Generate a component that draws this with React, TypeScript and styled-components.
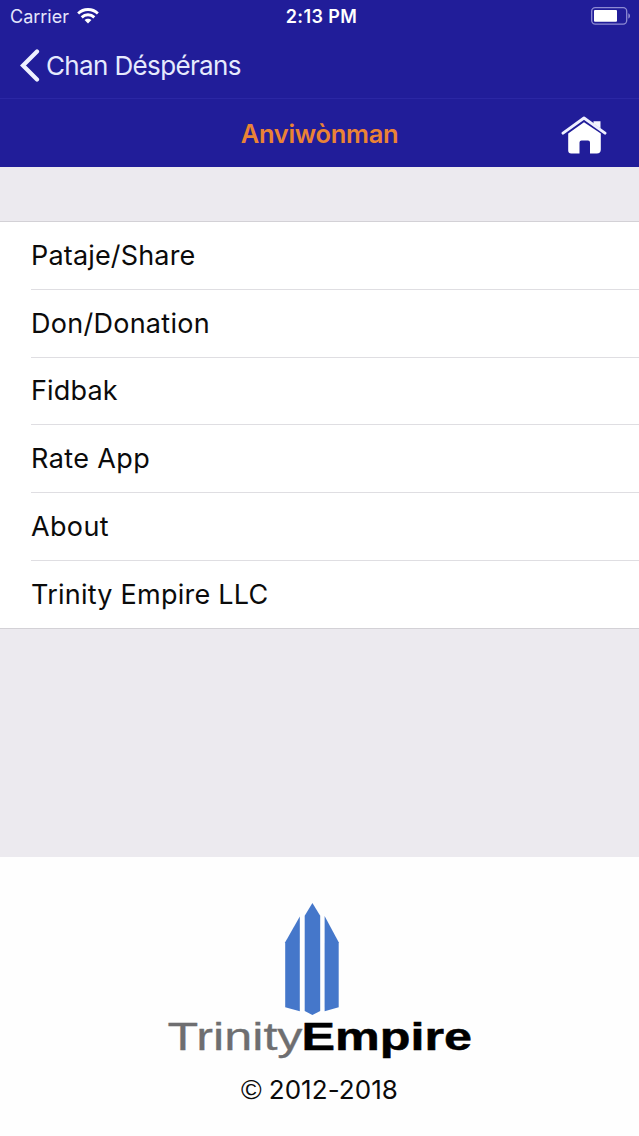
import React from 'react';
import styled, { createGlobalStyle } from 'styled-components';

const GlobalStyle = createGlobalStyle`
  * { box-sizing: border-box; }
  body {
    margin: 0;
    background: #fff;
    font-family: Inter, "Liberation Sans", sans-serif;
    -webkit-font-smoothing: antialiased;
  }
`;

const Screen = styled.div`
  width: 639px;
  height: 1136px;
  display: flex;
  flex-direction: column;
  overflow: hidden;
  background: #eceaef;
`;

const Header = styled.header`
  flex: none;
  height: 167px;
  background: #211d99;
  color: #fff;
`;

const StatusBar = styled.div`
  height: 34px;
  display: grid;
  grid-template-columns: 1fr auto 1fr;
  align-items: center;
  padding: 0 8px 2px 10px;
`;

const Carrier = styled.div`
  display: flex;
  align-items: center;
  gap: 8px;
  font-size: 18px;
  letter-spacing: 0;
  color: #e4e6fb;
`;

const Clock = styled.div`
  font-size: 18px;
  font-weight: 600;
  letter-spacing: 0.4px;
  padding-left: 2px;
`;

const Battery = styled.div`
  justify-self: end;
  display: flex;
`;

const BackBar = styled.div`
  height: 65px;
  display: flex;
  align-items: center;
  gap: 6px;
  padding: 0 0 2px 20px;
  border-bottom: 1px solid #2b27a4;
`;

const BackLabel = styled.span`
  font-size: 26px;
  line-height: 32px;
  letter-spacing: -0.64px;
  padding-top: 1px;
  color: #e6eafd;
`;

const TitleBar = styled.div`
  height: 68px;
  display: grid;
  grid-template-columns: 1fr auto 1fr;
  align-items: center;
  padding-right: 32px;
  padding-left: 32px;
`;

const Title = styled.h1`
  grid-column: 2;
  margin: 0;
  padding-top: 2px;
  font-size: 25.5px;
  line-height: 32px;
  font-weight: 600;
  letter-spacing: -0.3px;
  color: #ea8335;
`;

const HomeButton = styled.div`
  justify-self: end;
  display: flex;
  padding-top: 4px;
`;

const Menu = styled.ul`
  flex: none;
  list-style: none;
  margin: 54px 0 0;
  padding: 0 0 0 31px;
  background: #fff;
  border-top: 1px solid #d3d1d6;
  border-bottom: 1px solid #d3d1d6;
`;

const MenuItem = styled.li<{ $spacing: number }>`
  height: 67.8px;
  display: flex;
  align-items: center;
  font-size: 27px;
  letter-spacing: ${(p) => p.$spacing}px;
  color: #0b0b0b;
  border-bottom: 1px solid #dfdee2;
  &:last-child {
    height: 67px;
    border-bottom: 0;
  }
`;

const Footer = styled.footer`
  margin-top: auto;
  height: 279px;
  display: flex;
  flex-direction: column;
  align-items: center;
  padding-top: 43px;
  background: #fefefe;
`;

const Copyright = styled.div`
  display: flex;
  align-items: center;
  gap: 7px;
  margin-top: 14px;
  font-size: 26px;
  line-height: 32px;
  letter-spacing: 0.05px;
  color: #0a0a0a;
`;

const CopyrightSign = styled.span`
  font-family: "Liberation Sans", sans-serif;
  font-size: 28px;
`;

const items: { label: string; spacing: number }[] = [
  { label: 'Pataje/Share', spacing: 0.17 },
  { label: 'Don/Donation', spacing: 0.27 },
  { label: 'Fidbak', spacing: 0.17 },
  { label: 'Rate App', spacing: 0.4 },
  { label: 'About', spacing: 0.35 },
  { label: 'Trinity Empire LLC', spacing: 0.24 },
];

const WifiIcon = () => (
  <svg width="22" height="16" viewBox="0 0 23 16" preserveAspectRatio="none" fill="none" stroke="#fff" strokeWidth="3">
    <path d="M1.2 5.5C6.8 0.3 16.2 0.3 21.8 5.5" />
    <path d="M4.9 9.4C8.6 6 14.4 6 18.1 9.4" />
    <path d="M11.5 15.6L7.9 12C9.9 10.2 13.1 10.2 15.1 12Z" fill="#fff" stroke="none" />
  </svg>
);

const BatteryIcon = () => (
  <svg width="40" height="18" viewBox="0 0 40 18">
    <rect x="0.7" y="0.7" width="35" height="16.4" rx="3.5" fill="none" stroke="#8e8bd3" strokeWidth="1.3" />
    <rect x="3" y="3" width="23" height="11.8" rx="1" fill="#fff" />
    <path d="M37.3 6.2C39.6 7 39.6 10.8 37.3 11.6Z" fill="#8e8bd3" />
  </svg>
);

const BackIcon = () => (
  <svg width="20" height="33" viewBox="0 0 20 33" fill="none" stroke="#eef1ff" strokeWidth="4.2" strokeLinecap="round" strokeLinejoin="miter">
    <path d="M17 2.5L3 16.5L17 30.5" />
  </svg>
);

const HomeIcon = () => (
  <svg width="46" height="38" viewBox="0 0 46 38">
    <path d="M2 17.2L23 2L44 17.2" fill="none" stroke="#eef0ff" strokeWidth="2.9" strokeLinecap="round" strokeLinejoin="round" />
    <path d="M32.5 5.2H39.5V12.6L32.5 7.5Z" fill="#f4f5ff" />
    <path
      d="M7.2 17.5L23 6.2L39.8 17.5V33.5Q39.8 37.5 35.8 37.5H29V26.6Q29 24.6 27 24.6H20.5Q18.5 24.6 18.5 26.6V37.5H10.2Q7.2 37.5 7.2 34.5Z"
      fill="#fff"
    />
  </svg>
);

const BrandLogo = () => (
  <svg width="307" height="160" viewBox="0 0 307 160">
    <g fill="#4577ca">
      <path d="M133.8 16.5V111.3L119.2 107.3V42.3Z" />
      <path d="M146.4 3L154.2 15.8V111L146.4 115L138.7 111V15.8Z" />
      <path d="M158.6 16L172.7 42.3V107.3L158.6 111.3Z" />
    </g>
    <text x="1.5" y="150" fontFamily='"Liberation Sans"' fontSize="38.8" fill="#6e6e70" stroke="#6e6e70" strokeWidth="0.3" textLength="135" lengthAdjust="spacingAndGlyphs">Trinity</text>
    <text x="135.5" y="150" fontFamily='"Liberation Sans"' fontSize="38.8" fontWeight="700" fill="#000" stroke="#000" strokeWidth="0.5" textLength="170.5" lengthAdjust="spacingAndGlyphs">Empire</text>
  </svg>
);

export default function App() {
  return (
    <>
      <GlobalStyle />
      <Screen>
        <Header>
          <StatusBar>
            <Carrier>
              <span>Carrier</span>
              <WifiIcon />
            </Carrier>
            <Clock>2:13 PM</Clock>
            <Battery>
              <BatteryIcon />
            </Battery>
          </StatusBar>
          <BackBar>
            <BackIcon />
            <BackLabel>Chan Déspérans</BackLabel>
          </BackBar>
          <TitleBar>
            <Title>Anviwònman</Title>
            <HomeButton>
              <HomeIcon />
            </HomeButton>
          </TitleBar>
        </Header>
        <Menu>
          {items.map((item) => (
            <MenuItem key={item.label} $spacing={item.spacing}>
              {item.label}
            </MenuItem>
          ))}
        </Menu>
        <Footer>
          <BrandLogo />
          <Copyright>
            <CopyrightSign>©</CopyrightSign>
            <span>2012-2018</span>
          </Copyright>
        </Footer>
      </Screen>
    </>
  );
}
